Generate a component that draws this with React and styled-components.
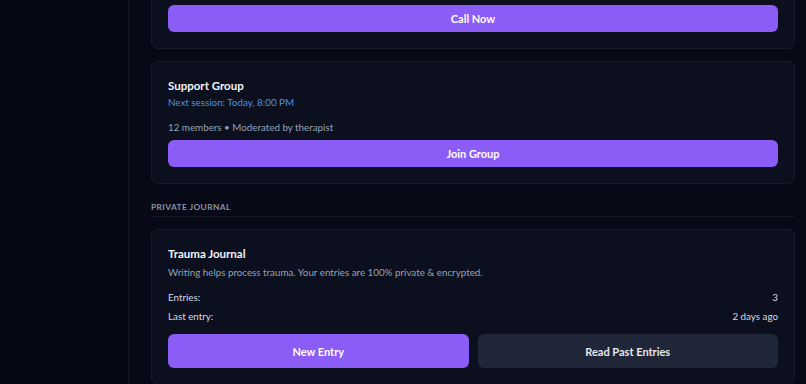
import React from 'react'
import styled, { createGlobalStyle } from 'styled-components'

const GlobalStyle = createGlobalStyle`
  html, body {
    margin: 0;
    padding: 0;
    background: #060913;
    font-family: Lato, 'Noto Sans', sans-serif;
    -webkit-font-smoothing: antialiased;
  }
`

const Shell = styled.div`
  display: flex;
  width: 806px;
  height: 384px;
  overflow: hidden;
  background: #070a16;
`

const Sidebar = styled.aside`
  width: 128px;
  flex-shrink: 0;
  background: #050812;
  border-right: 1px solid #111726;
`

const Main = styled.main`
  flex: 1;
  padding: 0 11px 0 22px;
  display: flex;
  flex-direction: column;
  gap: 12px;
  margin-top: -13px;
`

const Card = styled.section`
  flex-shrink: 0;
  background: #0b0f1e;
  border: 1px solid #171c2d;
  border-radius: 7px;
  padding: 16px;
  display: flex;
  flex-direction: column;
`

const Title = styled.h3`
  margin: 0;
  font-size: 11.5px;
  line-height: 16px;
  font-weight: 700;
  color: #f1f5f9;
`

const Meta = styled.p`
  margin: ${p => p.$mt || 0}px 0 0;
  font-size: 9.8px;
  line-height: 17px;
  color: ${p => p.$color || '#94a3b8'};
`

const Button = styled.button`
  flex: ${p => (p.$grow ? 1 : 'none')};
  width: ${p => (p.$grow ? 'auto' : '100%')};
  height: ${p => p.$h || 27}px;
  margin-top: ${p => p.$mt || 0}px;
  border: none;
  border-radius: 6px;
  background: ${p => (p.$secondary ? '#1f2637' : '#8b5cf6')};
  color: ${p => (p.$secondary ? '#e5e9f0' : '#ffffff')};
  font-family: inherit;
  font-size: 11px;
  font-weight: 700;
`

const SectionHeader = styled.h4`
  margin: 6px 0 0;
  padding-bottom: 4px;
  border-bottom: 1px solid #131827;
  font-size: 8.4px;
  line-height: 10px;
  font-weight: 700;
  letter-spacing: 0.4px;
  text-transform: uppercase;
  color: #8a93a6;
`

const Stats = styled.div`
  margin-top: 7px;
  display: flex;
  flex-direction: column;
`

const StatRow = styled.div`
  display: flex;
  justify-content: space-between;
  font-size: 9.8px;
  line-height: 19px;
  color: #d5dbe5;
`

const ButtonRow = styled.div`
  display: flex;
  gap: 9px;
  margin-top: 8px;
`

export default function App() {
  return (
    <>
      <GlobalStyle />
      <Shell>
        <Sidebar />
        <Main>
          <Card style={{ paddingTop: 0 }}>
            <Button $mt={17}>Call Now</Button>
          </Card>
          <Card>
            <Title>Support Group</Title>
            <Meta $color="#4f8fe8">Next session: Today, 8:00 PM</Meta>
            <Meta $mt={8}>12 members • Moderated by therapist</Meta>
            <Button $mt={4}>Join Group</Button>
          </Card>
          <SectionHeader>Private Journal</SectionHeader>
          <Card>
            <Title>Trauma Journal</Title>
            <Meta $mt={2}>Writing helps process trauma. Your entries are 100% private &amp; encrypted.</Meta>
            <Stats>
              <StatRow><span>Entries:</span><span>3</span></StatRow>
              <StatRow><span>Last entry:</span><span>2 days ago</span></StatRow>
            </Stats>
            <ButtonRow>
              <Button $grow $h={34}>New Entry</Button>
              <Button $grow $h={34} $secondary>Read Past Entries</Button>
            </ButtonRow>
          </Card>
        </Main>
      </Shell>
    </>
  )
}
